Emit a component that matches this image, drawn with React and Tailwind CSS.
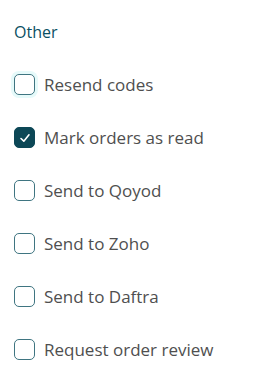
import { useState } from 'react';

const items = [
  { label: 'Resend codes', checked: false, focused: true },
  { label: 'Mark orders as read', checked: true },
  { label: 'Send to Qoyod', checked: false },
  { label: 'Send to Zoho', checked: false },
  { label: 'Send to Daftra', checked: false },
  { label: 'Request order review', checked: false },
];

function Row({ label, checked, focused, onToggle }) {
  return (
    <label className="flex items-center gap-[9px] h-[53px] cursor-pointer">
      <span
        onClick={onToggle}
        className={
          checked
            ? 'flex items-center justify-center w-[21px] h-[21px] rounded-[5px] bg-[#0c4756] border-[1.5px] border-[#0c4756]'
            : focused
            ? 'w-[21px] h-[21px] rounded-[5px] border-[1.5px] border-[#3f7581] bg-white ring-[3px] ring-[#e6fafa]'
            : 'w-[21px] h-[21px] rounded-[5px] border-[1.5px] border-[#3f7581] bg-white'
        }
      >
        {checked && (
          <svg width="12" height="12" viewBox="0 0 12 12" fill="none">
            <path d="M2 6.5 L4.8 9.2 L10 2.8" stroke="white" strokeWidth="1.6" strokeLinecap="round" strokeLinejoin="round" />
          </svg>
        )}
      </span>
      <span className="text-[17px] text-[#4f4f4f]">{label}</span>
    </label>
  );
}

export default function App() {
  const [state, setState] = useState(items);

  return (
    <div className="w-[262px] h-[378px] bg-white px-[14px] pt-[21px]" style={{ fontFamily: '"Open Sans", Lato, sans-serif' }}>
      <h3 className="text-[16px] font-medium text-[#0a4f63] leading-[22px]">Other</h3>
      <div className="mt-[15px] flex flex-col">
        {state.map((it, i) => (
          <Row
            key={it.label}
            {...it}
            onToggle={() => setState(s => s.map((x, j) => (j === i ? { ...x, checked: !x.checked } : x)))}
          />
        ))}
      </div>
    </div>
  );
}
